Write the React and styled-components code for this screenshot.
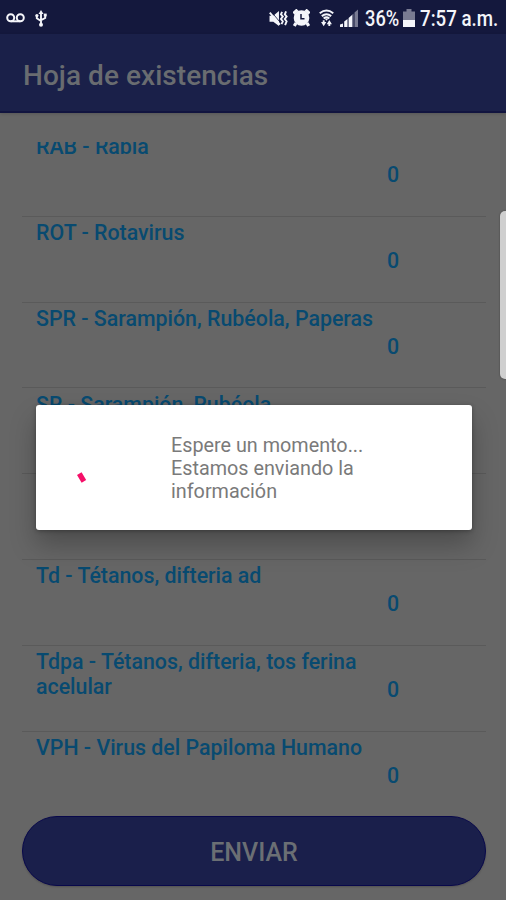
import styled, { createGlobalStyle } from "styled-components";

/* -------------------- STYLES -------------------- */

const GlobalStyle = createGlobalStyle`
  * {
    box-sizing: border-box;
  }

  body {
    margin: 0;
    font-family: Roboto, "Liberation Sans", sans-serif;
  }
`;

const Screen = styled.div`
  position: relative;
  display: flex;
  flex-direction: column;
  width: 506px;
  height: 900px;
  overflow: hidden;
  background: #666666;
`;

const StatusBar = styled.div`
  display: flex;
  align-items: center;
  justify-content: space-between;
  flex-shrink: 0;
  height: 34px;
  padding: 2px 7px 0 6px;
  background: #14183d;
  color: #f4f5fa;
`;

const StatusGroup = styled.div`
  display: flex;
  align-items: center;
`;

const StatusIcon = styled.svg`
  display: block;
  flex-shrink: 0;
  margin-right: ${({ $gap }) => $gap || 0}px;
`;

const StatusText = styled.span`
  flex-shrink: 0;
  width: ${({ $width }) => $width}px;
  margin-right: ${({ $gap }) => $gap || 0}px;
  padding-top: 2px;
  font-size: 22px;
  font-weight: 500;
  line-height: 30px;
  white-space: nowrap;
  transform: scaleX(${({ $squeeze }) => $squeeze});
  transform-origin: left;
`;

const AppBar = styled.header`
  display: flex;
  align-items: center;
  flex-shrink: 0;
  height: 79px;
  padding: 5px 23px 0;
  background: #1a2049;
  border-bottom: 2px solid #11143f;
  box-shadow: 0 1px 3px rgba(0, 0, 0, 0.15);
`;

const Title = styled.h1`
  margin: 0;
  font-size: 28px;
  font-weight: 500;
  letter-spacing: 0.05px;
  color: #696c70;
`;

const List = styled.div`
  flex-shrink: 0;
  height: 658px;
  margin: 29px 20px 0 22px;
  overflow: hidden;
`;

const Rows = styled.div`
  margin-top: -12px;
`;

const Row = styled.div`
  display: flex;
  height: 85.8px;
  padding: 4.4px 0 0 14px;
  box-shadow: 0 1px 0 #5a5a5a;
  font-size: 21.35px;
  font-weight: 500;
  line-height: 25px;
  color: #084a70;

  &:last-child {
    box-shadow: none;
  }
`;

const Name = styled.div`
  width: 351px;
`;

const Count = styled.div`
  padding-top: 28px;
`;

const SendButton = styled.button`
  flex-shrink: 0;
  height: 70px;
  margin: 16px 20px 0 22px;
  padding-top: 3px;
  border: 1px solid #08084b;
  border-radius: 36px;
  background: #1a1f4b;
  box-shadow: 0 1px 2px rgba(0, 0, 0, 0.2);
  font-family: inherit;
  font-size: 25px;
  font-weight: 500;
  color: #6b6f74;
`;

const Dialog = styled.div`
  position: absolute;
  top: 405px;
  left: 36px;
  display: flex;
  align-items: center;
  width: 436px;
  height: 124.5px;
  padding: 2px 0 0 34px;
  border-radius: 3px;
  background: #ffffff;
  box-shadow: 0 15px 26px rgba(0, 0, 0, 0.25), 0 1px 4px rgba(0, 0, 0, 0.3);
`;

const Spinner = styled.svg`
  flex-shrink: 0;
  margin-right: 41px;
`;

const Message = styled.p`
  width: 210px;
  margin: 0;
  font-size: 19.8px;
  font-weight: 400;
  line-height: 23px;
  color: #7a7a7a;
`;

const EdgeHandle = styled.div`
  position: absolute;
  top: 211px;
  right: 0;
  width: 6px;
  height: 168px;
  border-radius: 5px 0 0 5px;
  background: #cfcfcf;
  box-shadow: 0 0 2px rgba(0, 0, 0, 0.4);
`;

/* -------------------- DATA -------------------- */

const vaccines = [
  { name: "RAB - Rabia", count: 0 },
  { name: "ROT - Rotavirus", count: 0 },
  { name: "SPR - Sarampión, Rubéola, Paperas", count: 0 },
  { name: "SR - Sarampión, Rubéola", count: 0 },
  { name: "", count: null },
  { name: "Td - Tétanos, difteria ad", count: 0 },
  { name: "Tdpa - Tétanos, difteria, tos ferina acelular", count: 0 },
  { name: "VPH - Virus del Papiloma Humano", count: 0 },
];

/* -------------------- ICONS -------------------- */

const VoicemailIcon = () => (
  <StatusIcon $gap={10} width="19" height="11" viewBox="0 0 19 11" fill="none" stroke="currentColor" strokeWidth="2">
    <circle cx="4.7" cy="4.8" r="3.5" />
    <circle cx="14.3" cy="4.8" r="3.5" />
    <path d="M4.7 8.3H14.3" />
  </StatusIcon>
);

const UsbIcon = () => (
  <StatusIcon width="12" height="17" viewBox="0 0 12 17" fill="none" stroke="currentColor" strokeWidth="1.9">
    <path d="M6 3V14M1.8 5.5V8.2L6 11M10.2 5V8L6 10.2" />
    <path d="M6 0L8.5 4H3.5Z" fill="currentColor" stroke="none" />
    <circle cx="6" cy="14.7" r="2" fill="currentColor" stroke="none" />
    <circle cx="1.9" cy="5.6" r="1.6" fill="currentColor" stroke="none" />
    <path d="M8.8 3.6H11.7V6.4H8.8Z" fill="currentColor" stroke="none" />
  </StatusIcon>
);

const MuteIcon = () => (
  <StatusIcon $gap={5} width="19" height="17" viewBox="0 0 20 18">
    <path d="M0.5 6H4.5L10.5 1V17L4.5 12.5H0.5Z" fill="currentColor" />
    <path d="M2.5 2L13 14.5" stroke="#14183d" strokeWidth="0.9" />
    <path d="M0.8 2.8L11.5 15.5" stroke="currentColor" strokeWidth="2" />
    <path
      d="M13.8 2L12.6 4.5L14.6 7L12.6 9.5L14.6 12L13.2 15M18 1.5L16.7 4.5L18.6 7L16.7 9.5L18.6 12L17 16"
      fill="none"
      stroke="currentColor"
      strokeWidth="2"
    />
  </StatusIcon>
);

const AlarmIcon = () => (
  <StatusIcon $gap={9} width="17" height="18" viewBox="0 0 17 18">
    <path d="M0.5 4.5L4.5 0.8M16.5 4.5L12.5 0.8M3 14L1.3 17M14 14L15.7 17" stroke="currentColor" strokeWidth="3.2" />
    <circle cx="8.5" cy="9" r="7.8" fill="currentColor" />
    <path d="M8 5V9.7H11.5" fill="none" stroke="#14183d" strokeWidth="1.5" />
  </StatusIcon>
);

const WifiIcon = () => (
  <StatusIcon $gap={6} width="15" height="18" viewBox="0 0 16 18" fill="none" stroke="currentColor">
    <path d="M0.8 4Q8 -1.8 15.2 4" strokeWidth="2.1" />
    <path d="M3 7Q8 2.8 13 7" strokeWidth="2.1" />
    <path d="M5 9.6Q8 7 11 9.6" strokeWidth="2" />
    <path d="M6 9.5H10L8 12Z" fill="currentColor" stroke="none" />
    <path d="M2.2 13.2H7.8L5 17.8ZM8.2 15.6H13.8L11 11Z" fill="currentColor" stroke="none" />
    <path d="M4 11.5H6V14H4ZM10 14H12V17.5H10Z" fill="currentColor" stroke="none" />
  </StatusIcon>
);

const SignalIcon = () => (
  <StatusIcon $gap={7} width="18" height="18" viewBox="0 0 18 18" fill="currentColor">
    <path d="M0 15.5L3 14.5V18H0ZM4.2 12.5L7.5 10V18H4.2ZM8.6 9L12 6V18H8.6Z" />
    <path d="M12 6L13.5 4.5V18H12ZM14.5 3.5L18 0.5V18H14.5Z" opacity="0.45" />
  </StatusIcon>
);

const BatteryIcon = () => (
  <StatusIcon $gap={5} width="12" height="18" viewBox="0 0 12 18" fill="currentColor">
    <path d="M3.5 0H8.5V2.5H12V11H0V2.5H3.5Z" opacity="0.45" />
    <path d="M0 11H12V18H0Z" />
  </StatusIcon>
);

export default function App() {
  return (
    <>
      <GlobalStyle />
      <Screen>
        <StatusBar>
          <StatusGroup>
            <VoicemailIcon />
            <UsbIcon />
          </StatusGroup>
          <StatusGroup>
            <MuteIcon />
            <AlarmIcon />
            <WifiIcon />
            <SignalIcon />
            <StatusText $width={34} $squeeze={0.83} $gap={4}>
              36%
            </StatusText>
            <BatteryIcon />
            <StatusText $width={79} $squeeze={0.85}>
              7:57 a.m.
            </StatusText>
          </StatusGroup>
        </StatusBar>

        <AppBar>
          <Title>Hoja de existencias</Title>
        </AppBar>

        <List>
          <Rows>
            {vaccines.map((vaccine, i) => (
              <Row key={i}>
                <Name>{vaccine.name}</Name>
                <Count>{vaccine.count}</Count>
              </Row>
            ))}
          </Rows>
        </List>

        <SendButton>ENVIAR</SendButton>

        {/* Sending dialog */}
        <Dialog>
          <Spinner width="60" height="60" viewBox="0 0 60 60">
            <path d="M9.3 35.7L13.9 43.4" stroke="#f50f68" strokeWidth="5.3" />
          </Spinner>
          <Message>Espere un momento... Estamos enviando la información</Message>
        </Dialog>

        <EdgeHandle />
      </Screen>
    </>
  );
}
